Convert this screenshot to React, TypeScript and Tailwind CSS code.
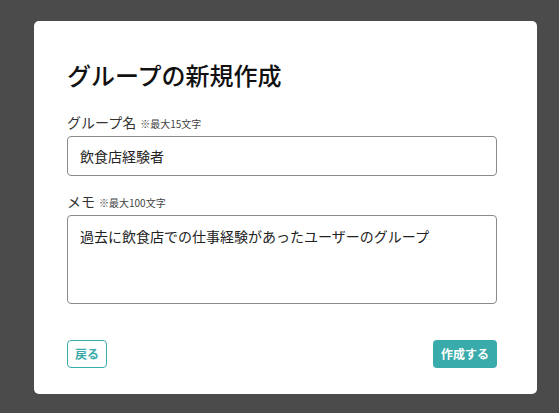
import React from 'react';

const font = { fontFamily: '"Noto Sans CJK JP", "Noto Sans", sans-serif' };

export default function App() {
  return (
    <div className="min-h-screen bg-[#4b4b4b] pl-[34px] pt-[21px]" style={font}>
      <div className="w-[503px] rounded-[5px] bg-white pb-[26px] pl-[33px] pr-[40px] pt-[36px]">
        <h1 className="text-[24px] font-medium leading-[36px] text-[#111]">グループの新規作成</h1>

        <div className="mt-[19px]">
          <label className="mb-1 flex h-[20px] items-baseline gap-[4px] text-[14px] leading-[20px] text-[#333]">
            グループ名
            <span className="text-[10px] leading-none text-[#444]">※最大15文字</span>
          </label>
          <input
            className="block h-[40px] w-full rounded-[4px] border border-[#8a8a8a] px-[12px] text-[14px] text-[#222] outline-none"
            style={font}
            defaultValue="飲食店経験者"
          />
        </div>

        <div className="mt-[15px]">
          <label className="mb-1 flex h-[20px] items-baseline gap-[4px] text-[14px] leading-[20px] text-[#333]">
            メモ
            <span className="text-[10px] leading-none text-[#444]">※最大100文字</span>
          </label>
          <textarea
            className="block h-[89px] w-full resize-none rounded-[4px] border border-[#8a8a8a] px-[12px] py-[10px] text-[14px] leading-[20px] text-[#222] outline-none"
            style={font}
            defaultValue="過去に飲食店での仕事経験があったユーザーのグループ"
          />
        </div>

        <div className="mt-[36px] flex items-center justify-between">
          <button className="h-[28px] rounded-[4px] border border-[#3aabab] bg-white px-[7px] text-[12px] font-bold text-[#3aabab]">
            戻る
          </button>
          <button className="h-[28px] rounded-[4px] bg-[#3aabab] px-[8px] text-[12px] font-bold text-white">
            作成する
          </button>
        </div>
      </div>
    </div>
  );
}
